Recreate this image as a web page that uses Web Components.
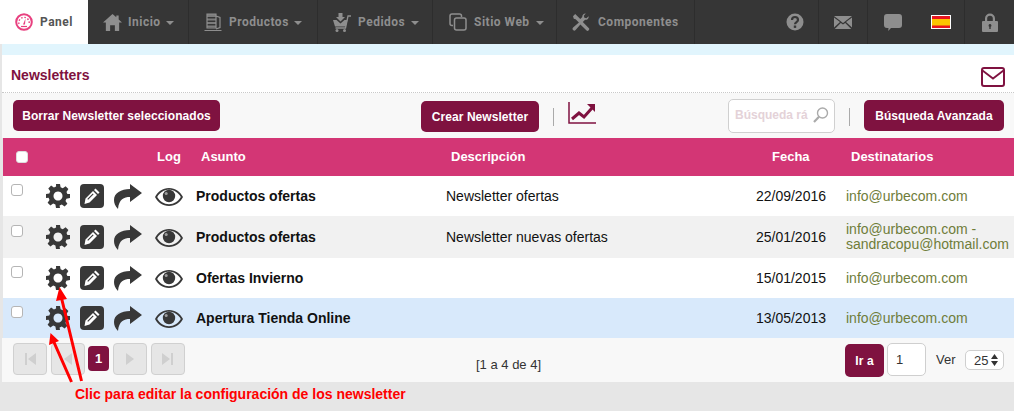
<!DOCTYPE html>
<html lang="es"><head><meta charset="utf-8"><title>Newsletters</title>
<style>
html,body{margin:0;padding:0;background:#e6e6e6;font-family:"Liberation Sans",Arial,sans-serif;width:1014px;height:411px;overflow:hidden}
</style></head><body>
<app-shell></app-shell>
<script>
const I={
home:'<svg width="19" height="19" viewBox="0 0 20 20"><path fill="currentColor" d="M10 1 L14 4.600V2.500h2.500v4.400L20 10h-3v9h-4.500v-6h-5v6H3v-9H0z"/></svg>',
box:'<svg width="19" height="19" viewBox="0 0 19 19"><g fill="none" stroke="currentColor" stroke-width="1.200"><path d="M3 1h9v14H3zM12 3l4 1.500v10L12 16M0.500 17.500h17"/></g><path fill="currentColor" d="M3 1h9v3H3zM3 5.500h9v2H3zM3 9h9v2H3zM3 12.500h9v2H3z" opacity=".8"/></svg>',
cart:'<svg width="19" height="19" viewBox="0 0 19 19"><path fill="currentColor" d="M6.500 0h4v4H13L8.500 8.500 4 4h2.500zM1 7h3.500l4 3.500 4-3.500h3.100l-1.800 6.500H3z"/><path fill="none" stroke="currentColor" stroke-width="1.300" d="M3.500 15h10L16 3h3"/><circle cx="5" cy="17.500" r="1.500" fill="currentColor"/><circle cx="12.500" cy="17.500" r="1.500" fill="currentColor"/></svg>',
copy:'<svg width="18" height="18" viewBox="0 0 18 18"><g fill="none" stroke="currentColor" stroke-width="1.500"><rect x="5.500" y="5" width="11.500" height="12" rx="2"/><path d="M4 12.500H3A2 2 0 0 1 1 10.500V3A2 2 0 0 1 3 1h7.500a2 2 0 0 1 2 2v1"/></g></svg>',
tools:'<svg width="18" height="18" viewBox="0 0 18 18"><path fill="currentColor" d="M1 3.200 3.200 1l5.100 5.100 2-2c-.3-1.800 1.200-3.800 3.500-3.600l-2 2.200.6 2 2 .6L16.700 3.200c.3 2.400-1.800 4-3.600 3.500l-2.300 2.300 5.900 5.900a1.600 1.600 0 0 1-2.400 2.400L8.400 11.400l-4.800 5.700a1.600 1.600 0 0 1-2.500-2.500L6.900 9.600 3.600 6.300 1.800 5.800z"/></svg>',
help:'<svg width="18" height="18" viewBox="0 0 18 18"><circle cx="9" cy="9" r="8.500" fill="currentColor"/><path fill="none" stroke="#363636" stroke-width="2.200" d="M6 7c0-4 6-4 6 0 0 2.200-3 2-3 4.300"/><rect x="7.800" y="12.500" width="2.400" height="2.400" fill="#363636"/></svg>',
mail:'<svg width="18" height="13" viewBox="0 0 18 13"><path fill="currentColor" d="M0 0h18L9 7zM0 1.500V11.500L6 6zM18 1.500V11.500L12 6zM.8 13l6-6.100L9 8.600l2.200-1.700 6 6.100z"/></svg>',
chat:'<svg width="18" height="17" viewBox="0 0 18 17"><path fill="currentColor" d="M3 0h12a3 3 0 0 1 3 3v8a3 3 0 0 1-3 3H7l-2.800 3 .3-3H3a3 3 0 0 1-3-3V3a3 3 0 0 1 3-3z"/></svg>',
lock:'<svg width="16" height="19" viewBox="0 0 16 19"><path fill="currentColor" fill-rule="evenodd" d="M3 8V5.500a5 5 0 0 1 10 0V8h2a1 1 0 0 1 1 1v9a1 1 0 0 1-1 1H1a1 1 0 0 1-1-1V9a1 1 0 0 1 1-1zM5.200 8h5.600V5.500a2.800 2.800 0 0 0-5.600 0zM8 11a1.500 1.500 0 0 0-.7 2.800V16h1.400v-2.200A1.500 1.500 0 0 0 8 11z"/></svg>',
flag:'<svg width="20" height="14" viewBox="0 0 20 14"><rect width="20" height="14" fill="#fff"/><rect x="1" y="1" width="18" height="12" fill="#e8141e"/><rect x="1" y="4" width="18" height="6.500" fill="#fcc400"/></svg>',
gauge:'<svg width="18" height="18" viewBox="0 0 18 18"><circle cx="9" cy="9" r="7.800" fill="none" stroke="#e8407f" stroke-width="2"/><path fill="none" stroke="#e8407f" stroke-width="1.400" stroke-dasharray="1.500 1.800" d="M4 11a5.200 5.200 0 1 1 10 0"/><path fill="#e8407f" d="M10.500 5.500 10 11.500H8z"/><path stroke="#e8407f" stroke-width="1.200" d="M6 13.500h6"/></svg>',
gear:'<svg width="24" height="24" viewBox="0 0 24 24"><path fill="currentColor" fill-rule="evenodd" d="M10 0h4l.6 3.300 2.200.9 2.800-1.900 2.800 2.800-1.900 2.800.9 2.200L24 10v4l-3.600.7-.9 2.200 1.900 2.800-2.800 2.800-2.800-1.900-2.200.9L14 24h-4l-.6-3.500-2.200-.9-2.800 1.900-2.800-2.800 1.900-2.800-.9-2.200L0 14v-4l3.300-.6.900-2.200-1.900-2.800 2.800-2.800 2.800 1.900 2.200-.9zM12 7.500a4.500 4.500 0 1 0 .01 0z"/></svg>',
edit:'<svg width="24" height="24" viewBox="0 0 24 24"><rect width="24" height="24" rx="4" fill="currentColor"/><path fill="#fff" d="M15.500 4.500l4 4-1.500 1.500-4-4zM13 7l4 4-7.500 7.500-5 1.500 1-5.500z"/><path fill="currentColor" d="M12.800 9.500l.8.800-5.500 5.500-.8-.8z"/></svg>',
share:'<svg width="28" height="25" viewBox="0 0 28 25"><path fill="currentColor" d="M16 0 28 9 16 18V13C10 13 5 15 4 25 1 22 0 19 0 16 0 9 7 5 16 5z"/></svg>',
eye:'<svg width="28" height="18" viewBox="0 0 28 18"><path fill="currentColor" fill-rule="evenodd" d="M14 0C20.500 0 25 3.500 28 9c-3 5.500-7.500 9-14 9S3 14.500 0 9C3 3.500 7.500 0 14 0zM14 1.800C9 1.800 4.800 4.500 2.200 9c2.600 4.500 6.800 7.200 11.800 7.200S23.200 13.500 25.800 9C23.200 4.500 19 1.800 14 1.800z"/><circle cx="14" cy="8" r="6.200" fill="currentColor"/><circle cx="11.200" cy="5.500" r="1.500" fill="#fff" opacity=".5"/></svg>',
chart:'<svg width="28" height="22" viewBox="0 0 28 22"><path fill="none" stroke="#7f1240" stroke-width="1.500" d="M1 0v21h27"/><path fill="none" stroke="#7f1240" stroke-width="3" d="M4 17l7-6 5 4 8-9"/><path fill="#7f1240" d="M19 2h8v8z"/></svg>',
env:'<svg width="24" height="20" viewBox="0 0 24 20"><rect x="1" y="1" width="22" height="18" rx="2" fill="none" stroke="#7f1240" stroke-width="2"/><path fill="none" stroke="#7f1240" stroke-width="1.800" d="M1.500 3.500 12 11.500 22.500 3.500"/></svg>',
search:'<svg width="16" height="16" viewBox="0 0 16 16"><circle cx="9.500" cy="6" r="5" fill="none" stroke="#aaa" stroke-width="1.400"/><path stroke="#aaa" stroke-width="2.200" d="M6 9.800 1 15"/></svg>'
};
function def(name,css,html){
  customElements.define(name,class extends HTMLElement{
    connectedCallback(){
      if(this.shadowRoot)return;
      const s=this.attachShadow({mode:'open'});
      s.innerHTML='<style>'+css+'</style>'+(typeof html==='function'?html(this):html);
    }
  });
}
def('nav-item',`
:host{display:flex;align-items:center;height:44px;box-sizing:border-box;border-right:1px solid #2d2d2d;color:#8e8e8e;font:700 12px Roboto,"Liberation Sans",sans-serif;letter-spacing:.5px;white-space:nowrap}
.c{width:0;height:0;border:4px solid transparent;border-top-color:currentColor;border-bottom:0;margin-top:2px}
svg{display:block;flex:none}
`,h=>{
  const i=h.getAttribute('icon');
  return `<span style="display:flex;align-items:center;gap:${h.getAttribute('gap')||7}px;padding-left:${h.getAttribute('pad')||0}px">${I[i]||''}<slot></slot>${h.hasAttribute('caret')?'<span class="c" style="margin-left:-1px"></span>':''}</span>`;
});
def('top-nav',`:host{display:flex;height:44px;background:#363636}
.panel{display:flex;width:88px;align-items:center;background:#fff;color:#555;font:700 12px Roboto,"Liberation Sans",sans-serif;letter-spacing:.5px;gap:7px;padding-left:15px;box-sizing:border-box}
nav-item{flex:none}`,`
<div class="panel">${I.gauge}<span>Panel</span></div>
<nav-item icon="home" pad="15" gap="6" caret style="width:101px">Inicio</nav-item>
<nav-item icon="box" pad="15" gap="6" caret style="width:129px">Productos</nav-item>
<nav-item icon="cart" pad="14" gap="7" caret style="width:115px">Pedidos</nav-item>
<nav-item icon="copy" pad="16" gap="7" caret style="width:124px">Sitio Web</nav-item>
<nav-item icon="tools" pad="15" gap="8" style="width:138px">Componentes</nav-item>
<nav-item style="width:124px;justify-content:flex-end;padding-right:14px">${I.help}</nav-item>
<nav-item style="width:49px;justify-content:center">${I.mail}</nav-item>
<nav-item style="width:49px;justify-content:center;border-right:0">${I.chat}</nav-item>
<nav-item style="width:48px;justify-content:center">${I.flag}</nav-item>
<nav-item style="width:49px;justify-content:center;border:0">${I.lock}</nav-item>`);
def('nl-button',`:host{display:inline-flex;align-items:center;justify-content:center;height:31px;background:#7f1240;color:#fff;border-radius:5px;font:700 12px "Liberation Sans",sans-serif;white-space:nowrap;box-sizing:border-box;letter-spacing:.06px}`,`<slot></slot>`);
def('page-head',`:host{display:flex;justify-content:space-between;align-items:center;height:38px;padding:3px 9px 0 9px;box-sizing:border-box;background:#fff;border-bottom:1px dotted #c9c9c9;color:#7f1240;font:700 14px "Liberation Sans",sans-serif}
svg{display:block;margin-top:3px}`,`<span>Newsletters</span>${I.env}`);
def('nl-toolbar',`:host{display:flex;align-items:flex-start;height:45px;box-sizing:border-box;background:#f8f8f8;padding-top:7px;padding-left:11px}
.sep{width:1px;height:18px;background:#aaa;flex:none}
.search{width:107px;height:34px;box-sizing:border-box;border:1px solid #d0d0d0;border-radius:5px;background:#fff;margin-top:-1px;margin-left:132px;display:flex;align-items:center;justify-content:space-between;padding:0 5px 2px 6px;color:#e4d2d8;font:700 12px "Liberation Sans",sans-serif;overflow:hidden;white-space:nowrap}
svg{display:block;flex:none}`,`
<nl-button style="width:207px">Borrar Newsletter seleccionados</nl-button>
<nl-button style="width:118px;margin:1px 0 0 201px">Crear Newsletter</nl-button>
<span class="sep" style="margin:8px 14px 0"></span>
<span style="margin-top:2px">${I.chart}</span>
<div class="search"><span>Búsqueda rá</span>${I.search}</div>
<span class="sep" style="margin:8px 14px 0"></span>
<nl-button style="width:140px">Búsqueda Avanzada</nl-button>`);
const GRID='display:grid;grid-template-columns:40px 150px 250px 300px 83px 1fr;';
def('nl-head',`:host{${GRID}height:38px;align-items:center;background:#d33675;color:#fff;font:700 13px "Liberation Sans",sans-serif;margin-left:1px;padding-bottom:1px;box-sizing:border-box}
input{appearance:none;display:block;width:12px;height:12px;margin:0 0 0 13px;background:#fff;border:1px solid #ddd;border-radius:3px;box-sizing:border-box}`,`
<input type="checkbox"><span style="padding-left:114px">Log</span><span style="padding-left:8px">Asunto</span><span style="padding-left:8px">Descripción</span><span style="padding-left:29px">Fecha</span><span style="padding-left:25px">Destinatarios</span>`);
def('nl-row',`:host{${GRID}height:40px;align-items:center;background:#fff;color:#111;font:14px "Liberation Sans",sans-serif;margin-left:1px}
:host([alt]){background:#f1f1f1;height:42px}
:host([hi]){background:#d8e9fb}
input{appearance:none;display:block;width:12px;height:12px;margin:-13px 0 0 8px;background:#fff;border:1px solid #b5b5b5;border-radius:3px;box-sizing:border-box}
.ic{display:flex;align-items:center;color:#383838;height:100%}
svg{display:block;flex:none}
.sub{font-weight:700;padding-left:3px}
.des{padding-left:3px}
.dat{text-align:right}
.mail{padding-left:20px;color:#6f7d3a;line-height:15px;white-space:nowrap}`,
h=>`<input type="checkbox"><div class="ic"><span style="margin-left:3px">${I.gear}</span><span style="margin-left:10px">${I.edit}</span><span style="margin-left:10px">${I.share}</span><span style="margin-left:13px;padding-top:2px">${I.eye}</span></div>
<div class="sub">${h.getAttribute('s')}</div><div class="des">${h.getAttribute('d')||''}</div><div class="dat">${h.getAttribute('f')}</div><div class="mail">${h.getAttribute('m')}</div>`);
def('pager-btn',`:host{display:flex;align-items:center;justify-content:center;width:34px;height:32px;box-sizing:border-box;background:#e6e6e6;border:1px solid #d0d0d0;border-radius:4px;flex:none}
svg{display:block}`,h=>{
  const k=h.getAttribute('k');
  const p={first:'M3 2h2v12H3zM14 2v12L6 8z',prev:'M12 2v12L4 8z',next:'M4 2v12l8-6z',last:'M2 2v12l8-6zM11 2h2v12h-2z'}[k];
  return `<svg width="16" height="16" viewBox="0 0 16 16"><path fill="#cfcfcf" d="${p}"/></svg>`;
});
def('nl-pager',`:host{display:flex;align-items:flex-start;height:44px;box-sizing:border-box;background:#f8f8f8;padding:5px 0 0 11px;font:13px "Liberation Sans",sans-serif;color:#333}
.one{width:21px;height:25px;margin:3px 4px 0 3px;background:#7f1240;color:#fff;font-weight:700;border-radius:4px;display:flex;align-items:center;justify-content:center;flex:none}
.info{width:65px;margin:14px 0 0 291px;white-space:nowrap}
.go{height:33px;width:39px;margin:1px 0 0 304px;font-size:12px}
.inp{width:39px;height:33px;box-sizing:border-box;margin-left:3px;border:1px solid #cfcfcf;border-radius:5px;background:#fff;padding:8px 0 0 8px;font-size:13px}
.ver{margin:9px 0 0 10px;width:29px;font-size:13px}
.sel{width:39px;height:20px;box-sizing:border-box;margin-top:7px;border:1px solid #cfcfcf;border-radius:5px;background:#fff;display:flex;align-items:center;padding-left:8px;gap:2px;font-size:13px}
.sel svg{display:block}`,`
<pager-btn k="first"></pager-btn><pager-btn k="prev" style="margin-left:4px"></pager-btn><div class="one">1</div><pager-btn k="next"></pager-btn><pager-btn k="last" style="margin-left:4px"></pager-btn>
<div class="info">[1 a 4 de 4]</div>
<nl-button class="go">Ir a</nl-button><div class="inp">1</div><div class="ver">Ver</div>
<div class="sel"><span>25</span><svg width="9" height="12" viewBox="0 0 9 12"><path fill="#333" d="M4.500 0 8 5H1zM4.500 12 1 7h7z"/></svg></div>`);
def('note-arrows',`:host{position:absolute;left:0;top:0;width:1014px;height:411px;pointer-events:none}
svg{position:absolute;left:0;top:0}`,`<svg width="1014" height="411" viewBox="0 0 1014 411">
<path stroke="#f00" stroke-width="3" d="M81.500 381 61.500 298M71.500 382 53 340"/>
<path fill="#f00" d="M59.500 287 67 299 56 301zM50.500 333 59 341 49 345z"/></svg>`);
def('app-shell',`:host{display:block;width:1014px;height:411px;position:relative}
main{padding-left:2px}
.strip{height:11px;background:#e1f5fd}
.note{padding:4px 0 0 75px;color:#f00;font:700 14px "Liberation Sans",sans-serif}`,`
<top-nav></top-nav>
<main><div class="strip"></div>
<page-head></page-head>
<nl-toolbar></nl-toolbar>
<nl-head></nl-head>
<nl-row s="Productos ofertas" d="Newsletter ofertas" f="22/09/2016" m="info@urbecom.com"></nl-row>
<nl-row alt s="Productos ofertas" d="Newsletter nuevas ofertas" f="25/01/2016" m="info@urbecom.com -<br>sandracopu@hotmail.com"></nl-row>
<nl-row s="Ofertas Invierno" f="15/01/2015" m="info@urbecom.com"></nl-row>
<nl-row hi s="Apertura Tienda Online" f="13/05/2013" m="info@urbecom.com"></nl-row>
<nl-pager></nl-pager></main>
<div class="note">Clic para editar la configuración de los newsletter</div>
<note-arrows></note-arrows>`);
</script>
</body></html>
